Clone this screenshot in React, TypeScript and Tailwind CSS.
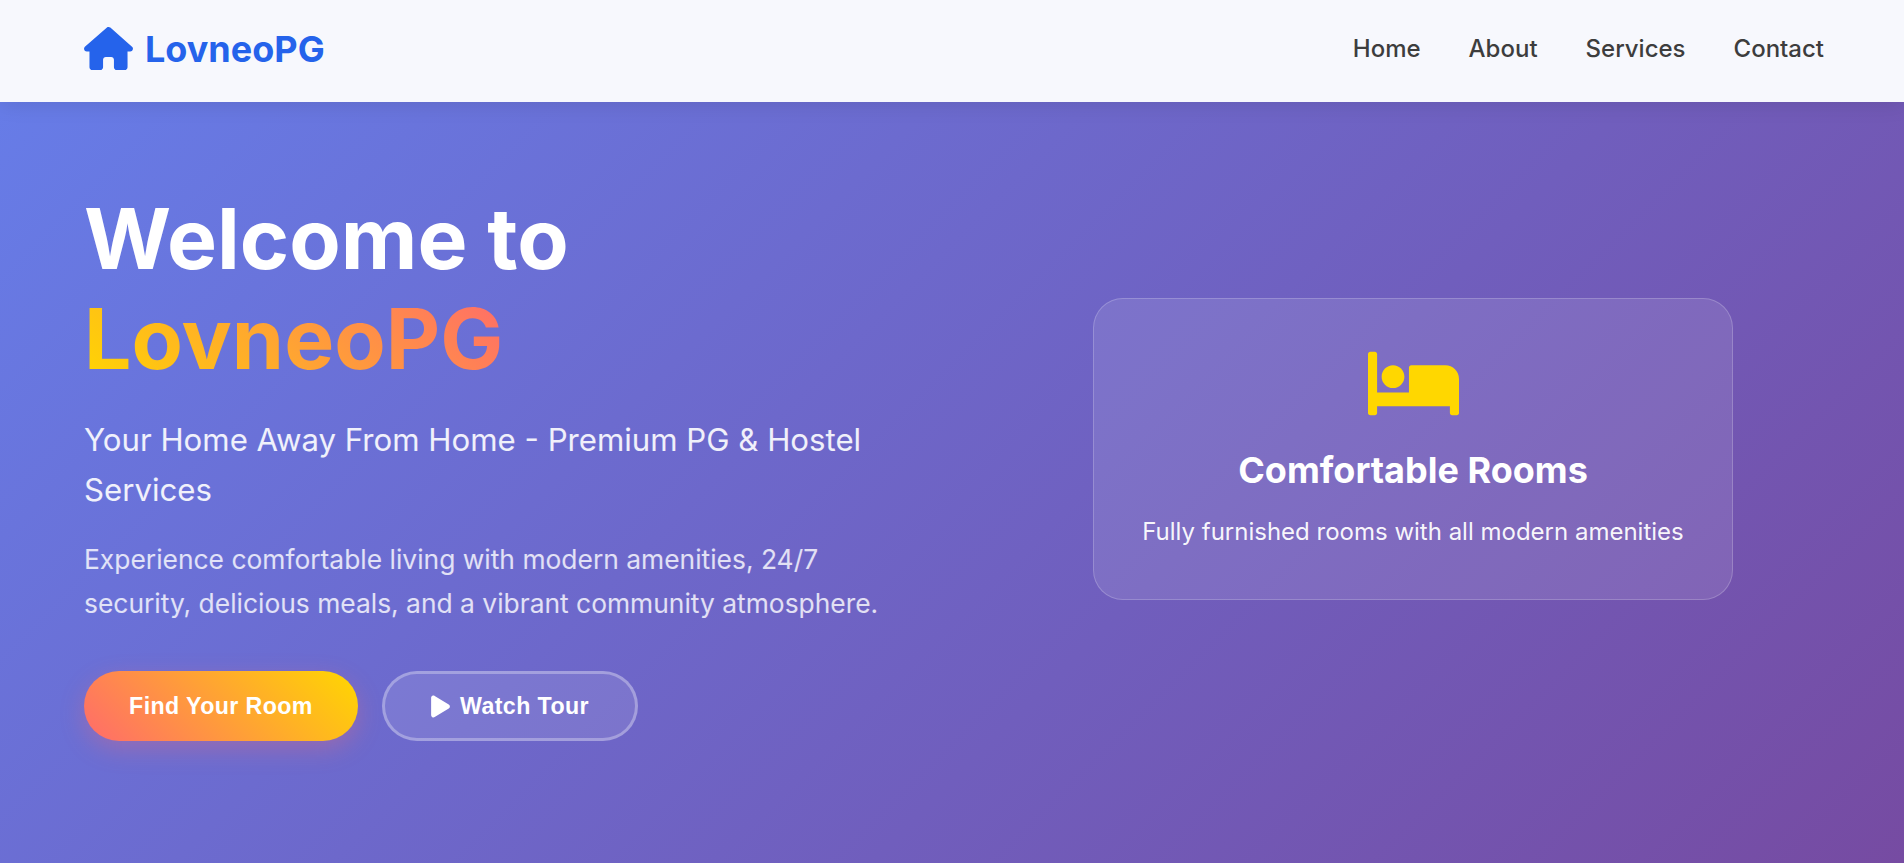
function BedIcon() {
  return (
    <svg viewBox="0 0 640 512" className="w-[91px] h-[73px] text-[#ffd700]" fill="currentColor">
      <path d="M176 288C220.1 288 256 252.1 256 208S220.1 128 176 128S96 163.9 96 208S131.9 288 176 288zM544 128H304C295.2 128 288 135.2 288 144V320H64V48C64 39.16 56.84 32 48 32h-32C7.156 32 0 39.16 0 48v416C0 472.8 7.156 480 16 480h32C56.84 480 64 472.8 64 464V416h512v48c0 8.836 7.162 16 16 16h32c8.836 0 16-7.164 16-16V224C640 170.1 597 128 544 128z" />
    </svg>
  );
}

function HouseIcon() {
  return (
    <svg viewBox="0 0 576 512" className="w-[49px] h-[43.5px]" fill="currentColor">
      <path d="M575.8 255.5C575.8 273.5 560.8 287.6 543.8 287.6H511.8L512.5 447.7C512.5 450.5 512.3 453.1 512 455.8V472C512 494.1 494.1 512 472 512H456C454.9 512 453.8 511.1 452.7 511.9C451.3 511.1 449.9 512 448.5 512H392C369.9 512 352 494.1 352 472V384C352 366.3 337.7 352 320 352H256C238.3 352 224 366.3 224 384V472C224 494.1 206.1 512 184 512H128.1C126.6 512 125.1 511.9 123.6 511.8C122.4 511.9 121.2 512 120 512H104C81.91 512 64 494.1 64 472V360C64 359.1 64.03 358.1 64.09 357.2V287.6H32.05C14.02 287.6 0 273.5 0 255.5C0 246.5 3.004 238.5 10.01 231.5L266.4 8.016C273.4 1.002 281.4 0 288.4 0C295.4 0 303.4 2.004 309.4 7.014L564.8 231.5C572.8 238.5 576.9 246.5 575.8 255.5L575.8 255.5z" />
    </svg>
  );
}

function PlayIcon() {
  return (
    <svg viewBox="0 0 384 512" className="w-[19px] h-[25px]" fill="currentColor">
      <path d="M361 215C375.3 223.8 384 239.3 384 256C384 272.7 375.3 288.2 361 296.1L73.03 472.1C58.21 482 39.66 482.4 24.52 473.9C9.377 465.4 0 449.4 0 432V80C0 62.64 9.377 46.63 24.52 38.13C39.66 29.64 58.21 29.99 73.03 39.04L361 215z" />
    </svg>
  );
}

export default function App() {
  return (
    <div className="h-[863px] overflow-hidden font-['Inter',sans-serif] bg-[linear-gradient(135deg,#667eea_0%,#764ba2_100%)] text-white flex flex-col">
      <nav className="h-[102px] shrink-0 bg-[#f7f8fd] pl-[84px] pr-[80px] pb-[5px] flex items-center justify-between shadow-[0_2px_20px_rgba(0,0,0,0.1)]">
        <div className="flex items-center gap-[12px] text-[#2563eb] text-[36px] font-bold">
          <HouseIcon />
          <span>LovneoPG</span>
        </div>
        <ul className="flex items-center gap-[48px] text-[#3d3d3d] text-[24px] font-medium pt-[1px]">
          <li>Home</li>
          <li>About</li>
          <li>Services</li>
          <li>Contact</li>
        </ul>
      </nav>
      <main className="flex-1 pl-[84px] pr-[80px] pt-[87px] pb-[122px] grid grid-cols-2 gap-[96px] items-center">
        <div>
          <h1 className="text-[84px] leading-[100px] font-bold">
            Welcome to
            <br />
            <span className="bg-[linear-gradient(45deg,#ffd700,#ff6b6b)] bg-clip-text text-transparent">LovneoPG</span>
          </h1>
          <p className="mt-[26px] text-[31.2px] leading-[50px] text-white/90">
            Your Home Away From Home - Premium PG &amp; Hostel Services
          </p>
          <p className="mt-[22px] text-[26.4px] leading-[44px] text-white/80">
            Experience comfortable living with modern amenities, 24/7 security, delicious meals, and a vibrant community atmosphere.
          </p>
          <div className="mt-[46px] flex gap-[24px] font-['Liberation_Sans',sans-serif] text-[23.2px] tracking-[0.4px] font-bold">
            <button className="h-[70px] w-[274px] rounded-full bg-[linear-gradient(45deg,#ff6b6b,#ffd700)] shadow-[0_8px_25px_rgba(255,107,107,0.3)]">
              Find Your Room
            </button>
            <button className="h-[70px] w-[256px] rounded-full border-[3px] border-white/30 bg-white/10 flex items-center justify-center gap-[10px]">
              <PlayIcon />
              Watch Tour
            </button>
          </div>
        </div>
        <div className="flex justify-center -translate-y-4">
          <div className="w-[640px] h-[302px] rounded-[30px] border border-white/20 bg-white/10 flex flex-col items-center pt-[48px]">
            <BedIcon />
            <h3 className="mt-[22px] text-[36px] font-bold leading-[56px]">Comfortable Rooms</h3>
            <p className="mt-[16px] text-[24px] leading-[36px] text-white/95">Fully furnished rooms with all modern amenities</p>
          </div>
        </div>
      </main>
    </div>
  );
}
